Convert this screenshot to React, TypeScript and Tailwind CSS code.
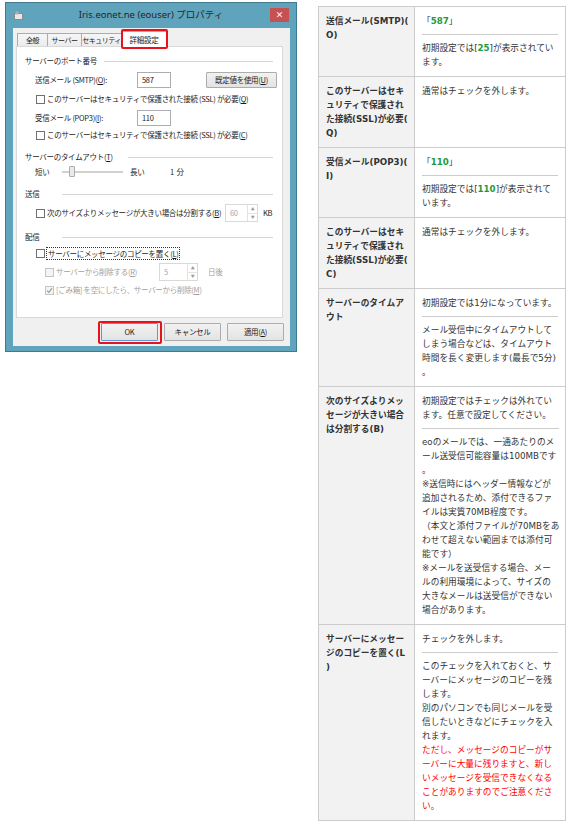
import React from "react";

const G = ({ children }: { children: React.ReactNode }) => (
  <span className="font-bold text-[#1e9a3c]">{children}</span>
);
const R = ({ children }: { children: React.ReactNode }) => (
  <span className="text-[#ff0000]">{children}</span>
);

type Row = { head: string[]; body: React.ReactNode[][] };

const ROWS: Row[] = [
  {
    head: ["送信メール(SMTP)(", "O)"],
    body: [
      [<>「<G>587</G>」</>],
      [<>初期設定では[<G>25</G>]が表示されてい</>, "ます。"],
    ],
  },
  {
    head: ["このサーバーはセキ", "ュリティで保護され", "た接続(SSL)が必要(", "Q)"],
    body: [["通常はチェックを外します。"]],
  },
  {
    head: ["受信メール(POP3)(", "I)"],
    body: [
      [<>「<G>110</G>」</>],
      [<>初期設定では[<G>110</G>]が表示されて</>, "います。"],
    ],
  },
  {
    head: ["このサーバーはセキ", "ュリティで保護され", "た接続(SSL)が必要(", "C)"],
    body: [["通常はチェックを外します。"]],
  },
  {
    head: ["サーバーのタイムア", "ウト"],
    body: [
      ["初期設定では1分になっています。"],
      [
        "メール受信中にタイムアウトして",
        "しまう場合などは、タイムアウト",
        "時間を長く変更します(最長で5分)",
        "。",
      ],
    ],
  },
  {
    head: ["次のサイズよりメッ", "セージが大きい場合", "は分割する(B)"],
    body: [
      ["初期設定ではチェックは外れてい", "ます。任意で設定してください。"],
      [
        "eoのメールでは、一通あたりのメ",
        "ール送受信可能容量は100MBです",
        "。",
        "※送信時にはヘッダー情報などが",
        "追加されるため、添付できるファ",
        "イルは実質70MB程度です。",
        "（本文と添付ファイルが70MBをあ",
        "わせて超えない範囲までは添付可",
        "能です）",
        "※メールを送受信する場合、メー",
        "ルの利用環境によって、サイズの",
        "大きなメールは送受信ができない",
        "場合があります。",
      ],
    ],
  },
  {
    head: ["サーバーにメッセー", "ジのコピーを置く(L", ")"],
    body: [
      ["チェックを外します。"],
      [
        "このチェックを入れておくと、サ",
        "ーバーにメッセージのコピーを残",
        "します。",
        "別のパソコンでも同じメールを受",
        "信したいときなどにチェックを入",
        "れます。",
        <R>ただし、メッセージのコピーがサ</R>,
        <R>ーバーに大量に残りますと、新し</R>,
        <R>いメッセージを受信できなくなる</R>,
        <R>ことがありますのでご注意くださ</R>,
        <R>い。</R>,
      ],
    ],
  },
];

function InfoTable() {
  return (
    <div className="mt-[6px] mr-[5px] w-[248px] shrink-0 border border-[#cccccc] font-['DejaVu_Sans','Noto_Sans_CJK_JP',sans-serif] text-[8.7px] leading-[14px] text-[#333333]">
      {ROWS.map((row, i) => (
        <div key={i} className={`flex ${i > 0 ? "border-t border-[#cccccc]" : ""}`}>
          <div className="w-[96px] shrink-0 border-r border-[#cccccc] bg-[#f2f2f2] px-[7px] py-[7px] font-bold">
            {row.head.map((l, j) => (
              <div key={j} className="whitespace-nowrap">{l}</div>
            ))}
          </div>
          <div className="flex-1 px-[7px] py-[7px]">
            {row.body.map((sec, j) => (
              <div key={j}>
                {j > 0 && <div className="my-[6px] border-t border-[#cccccc]" />}
                {sec.map((l, k) => (
                  <div key={k} className="whitespace-nowrap">{l}</div>
                ))}
              </div>
            ))}
          </div>
        </div>
      ))}
    </div>
  );
}

function Check({ checked, disabled }: { checked?: boolean; disabled?: boolean }) {
  return (
    <span
      className={`flex h-[9px] w-[9px] shrink-0 items-center justify-center border ${
        disabled ? "border-[#c4c4c4] bg-[#f4f4f4]" : "border-[#707070] bg-white"
      }`}
    >
      {checked && (
        <svg viewBox="0 0 8 8" className="h-[7px] w-[7px]">
          <path d="M1.2 4.2 L3.2 6.2 L6.8 1.6" fill="none" stroke={disabled ? "#9a9a9a" : "#333"} strokeWidth="1.4" />
        </svg>
      )}
    </span>
  );
}

function GroupHeader({ label, line }: { label: React.ReactNode; line: string }) {
  return (
    <div className="flex h-[14px] items-center">
      <span className="whitespace-nowrap">{label}</span>
      <div className={`ml-auto h-0 border-t border-[#d6d6d6] ${line}`} />
    </div>
  );
}

function Spinner({ value, width }: { value: string; width: string }) {
  return (
    <div className={`flex h-[18px] shrink-0 border border-[#d9d9d9] bg-white ${width}`}>
      <span className="flex flex-1 items-center pl-[4px] text-[#a8a8a8]">{value}</span>
      <div className="flex w-[10px] flex-col border-l border-[#e3e3e3]">
        <span className="flex flex-1 items-center justify-center border-b border-[#e3e3e3] text-[4px] leading-none text-[#9a9a9a]">▲</span>
        <span className="flex flex-1 items-center justify-center text-[4px] leading-none text-[#9a9a9a]">▼</span>
      </div>
    </div>
  );
}

function WinButton({ children, className = "" }: { children: React.ReactNode; className?: string }) {
  return (
    <div
      className={`flex shrink-0 items-center justify-center rounded-[1px] border bg-gradient-to-b from-[#f2f2f2] to-[#e3e3e3] whitespace-nowrap ${
        className.includes("border-") ? "" : "border-[#acacac]"
      } ${className}`}
    >
      {children}
    </div>
  );
}

const TAB =
  "flex h-[13px] items-center justify-center whitespace-nowrap border border-b-0 border-[#acacac] bg-gradient-to-b from-[#f6f6f6] to-[#ececec] text-[7px] tracking-[-0.5px]";

function Dialog() {
  return (
    <div className="mt-[2px] ml-[5px] flex h-[350px] w-[292px] shrink-0 flex-col border border-[#3f7a8e] bg-[#5fa4bc] font-['Noto_Sans_CJK_JP',sans-serif] text-[7.5px] tracking-[-0.3px] text-[#1a1a1a]">
      {/* title bar */}
      <div className="grid h-[25px] grid-cols-[1fr_auto_1fr] items-center">
        <div className="pl-[8px]">
          <svg width="9" height="9" viewBox="0 0 9 9">
            <rect x="0.5" y="2.5" width="8" height="6" fill="#e8e8e8" stroke="#8a8a8a" />
            <rect x="1.5" y="0.5" width="3" height="3" fill="#b0b0b0" />
          </svg>
        </div>
        <div className="font-['Noto_Sans','Noto_Sans_CJK_JP',sans-serif] text-[9.5px] tracking-normal text-[#262626]">
          Iris.eonet.ne (eouser) プロパティ
        </div>
        <div className="flex justify-end self-start pt-[5px] pr-[7px]">
          <div className="flex h-[14px] w-[19px] items-center justify-center bg-[#c75050] text-[8px] font-bold tracking-normal text-white">
            ×
          </div>
        </div>
      </div>

      {/* client */}
      <div className="ml-[7px] h-[318px] w-[277px] bg-[#f0f0f0]">
        <div className="ml-[3px] w-[267px]">
          {/* tabs */}
          <div className="flex h-[18px] items-end pl-[1px]">
            <div className={`${TAB} w-[31px]`}>全般</div>
            <div className={`${TAB} w-[34px] border-l-0`}>サーバー</div>
            <div className={`${TAB} w-[40px] border-l-0`}>セキュリティ</div>
            <div className="relative z-10 -mb-[1px] -ml-[1px] flex h-[16px] w-[46px] items-center justify-center border border-b-0 border-[#acacac] bg-white whitespace-nowrap">
              詳細設定
              <div className="absolute -top-[3px] -right-[2px] -bottom-[2px] -left-[1px] rounded-[2px] border-2 border-[#e8121e]" />
            </div>
          </div>

          {/* panel */}
          <div className="flex h-[272px] flex-col border border-[#d9d9d9] bg-white pt-[7px] pr-[9px] pl-[8px]">
            <GroupHeader label="サーバーのポート番号" line="w-[169px]" />

            <div className="mt-[3px] flex h-[18px] items-center pl-[10px]">
              <span className="w-[102px] shrink-0 whitespace-nowrap">
                送信メール (SMTP)(<u>O</u>):
              </span>
              <div className="flex h-[16px] w-[34px] shrink-0 items-center border border-[#abadb3] bg-white pl-[4px]">587</div>
              <WinButton className="ml-[35px] h-[16px] w-[71px]">
                既定値を使用(<u>U</u>)
              </WinButton>
            </div>

            <div className="mt-[2px] flex h-[16px] items-center gap-[2px] pl-[11px]">
              <Check />
              <span className="whitespace-nowrap">
                このサーバーはセキュリティで保護された接続 (SSL) が必要(<u>Q</u>)
              </span>
            </div>

            <div className="mt-[2px] flex h-[18px] items-center pl-[10px]">
              <span className="w-[102px] shrink-0 whitespace-nowrap">
                受信メール (POP3)(<u>I</u>):
              </span>
              <div className="flex h-[16px] w-[34px] shrink-0 items-center border border-[#abadb3] bg-white pl-[4px]">110</div>
            </div>

            <div className="flex h-[16px] items-center gap-[2px] pl-[11px]">
              <Check />
              <span className="whitespace-nowrap">
                このサーバーはセキュリティで保護された接続 (SSL) が必要(<u>C</u>)
              </span>
            </div>

            <div className="mt-[7px]">
              <GroupHeader label={<>サーバーのタイムアウト(<u>T</u>)</>} line="w-[145px]" />
            </div>

            <div className="flex h-[16px] items-center pl-[10px]">
              <span className="w-[27px] shrink-0">短い</span>
              <div className="relative flex h-[12px] w-[61px] shrink-0 items-center">
                <div className="h-[2px] w-full border border-[#d0d0d0] bg-[#e7e7e7]" />
                <div className="absolute top-0 left-[7px] h-[11px] w-[6px] rounded-[1px] border border-[#acacac] bg-[#e9e9e9]" />
              </div>
              <span className="ml-[7px] w-[40px] shrink-0">長い</span>
              <span className="whitespace-pre">1  分</span>
            </div>

            <div className="mt-[7px]">
              <GroupHeader label="送信" line="w-[211px]" />
            </div>

            <div className="mt-[3px] flex h-[18px] items-center pl-[11px]">
              <Check />
              <span className="ml-[2px] w-[178px] shrink-0 whitespace-nowrap">
                次のサイズよりメッセージが大きい場合は分割する(<u>B</u>)
              </span>
              <Spinner value="60" width="w-[33px]" />
              <span className="ml-[5px]">KB</span>
            </div>

            <div className="mt-[8px]">
              <GroupHeader label="配信" line="w-[211px]" />
            </div>

            <div className="mt-[1px] flex h-[16px] items-center pl-[11px]">
              <Check />
              <span className="ml-[1px] border border-dotted border-[#333] px-[1px] leading-[11px] whitespace-nowrap">
                サーバーにメッセージのコピーを置く(<u>L</u>)
              </span>
            </div>

            <div className="mt-[2px] flex h-[18px] items-center pl-[20px] text-[#a0a0a0]">
              <Check disabled />
              <span className="ml-[2px] w-[103px] shrink-0 whitespace-nowrap">
                サーバーから削除する(<u>R</u>)
              </span>
              <Spinner value="5" width="w-[39px]" />
              <span className="ml-[10px]">日後</span>
            </div>

            <div className="mt-[1px] flex h-[16px] items-center pl-[20px] text-[#a0a0a0]">
              <Check checked disabled />
              <span className="ml-[2px] whitespace-nowrap">
                [ごみ箱] を空にしたら、サーバーから削除(<u>M</u>)
              </span>
            </div>
          </div>
        </div>

        {/* buttons */}
        <div className="mt-[5px] flex justify-end gap-[6px] pr-[6px]">
          <div className="relative">
            <WinButton className="h-[18px] w-[57px] border-[#5b9bd5] from-[#eaf3fb] to-[#dcebf8]">OK</WinButton>
            <div className="absolute -top-[2px] -right-[4px] -bottom-[3px] -left-[3px] rounded-[2px] border-2 border-[#e8121e]" />
          </div>
          <WinButton className="h-[18px] w-[57px]">キャンセル</WinButton>
          <WinButton className="h-[18px] w-[57px]">
            適用(<u>A</u>)
          </WinButton>
        </div>
      </div>
    </div>
  );
}

export default function App() {
  return (
    <div className="flex h-[826px] w-[571px] items-start justify-between bg-white">
      <Dialog />
      <InfoTable />
    </div>
  );
}
